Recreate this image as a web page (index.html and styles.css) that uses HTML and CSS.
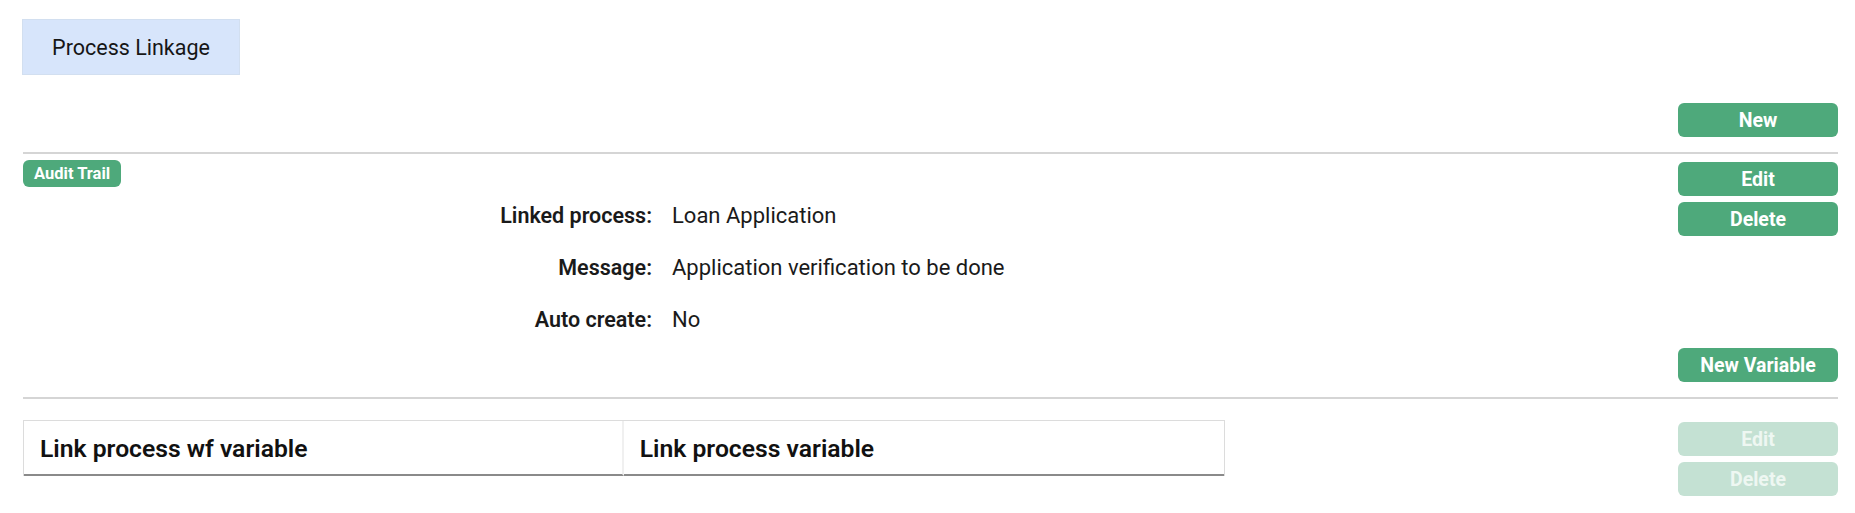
FILE: index.html
```html
<!DOCTYPE html>
<html lang="en">
<head>
<meta charset="utf-8">
<title>Process Linkage</title>
<link rel="stylesheet" href="styles.css">
</head>
<body>
<div class="page">
  <div class="tab">Process Linkage</div>

  <div class="toolbar toolbar-top">
    <button class="btn">New</button>
  </div>

  <hr class="divider">

  <div class="section">
    <div class="section-main">
      <span class="badge">Audit Trail</span>
      <div class="details">
        <div class="label">Linked process:</div>
        <div class="value">Loan Application</div>
        <div class="label">Message:</div>
        <div class="value">Application verification to be done</div>
        <div class="label">Auto create:</div>
        <div class="value">No</div>
      </div>
    </div>
    <div class="actions">
      <button class="btn">Edit</button>
      <button class="btn">Delete</button>
    </div>
  </div>

  <div class="toolbar toolbar-var">
    <button class="btn">New Variable</button>
  </div>

  <hr class="divider">

  <div class="vars">
    <table class="grid">
      <thead>
        <tr>
          <th class="col-first">Link process wf variable</th>
          <th>Link process variable</th>
        </tr>
      </thead>
    </table>
    <div class="actions actions-vars">
      <button class="btn" disabled>Edit</button>
      <button class="btn" disabled>Delete</button>
    </div>
  </div>
</div>
</body>
</html>
```
FILE: styles.css
```css
* { box-sizing: border-box; }
body {
  margin: 0;
  background: #fff;
  font-family: Roboto, "Noto Sans", sans-serif;
  color: #1a1a1a;
}
.page {
  padding: 19px 17px 0 23px;
}
.tab {
  width: 218px;
  height: 56px;
  margin-left: -1px;
  display: flex;
  align-items: center;
  justify-content: center;
  background: #d7e5fb;
  border: 1px solid #d2dff0;
  font-size: 21.5px;
  color: #161616;
}
.toolbar {
  display: flex;
  justify-content: flex-end;
}
.toolbar-top { margin-top: 28px; }
.toolbar-var { margin-top: 2px; }
.btn {
  width: 160px;
  height: 34px;
  border: 0;
  border-radius: 6px;
  background: #4ea97b;
  color: #fff;
  font-family: Roboto, sans-serif;
  font-weight: 700;
  font-size: 19.5px;
  padding: 0;
  cursor: pointer;
}
.btn:disabled {
  background: #c4e1d3;
  color: #eef7f2;
  cursor: default;
}
.divider {
  margin: 15px 0 0;
  border: 0;
  border-top: 2px solid #d5d5d5;
  height: 0;
}
.section {
  display: flex;
  justify-content: space-between;
  align-items: flex-start;
}
.section-main { flex: 1; }
.badge {
  display: inline-flex;
  align-items: center;
  height: 27px;
  margin-top: 6px;
  padding: 0 11px;
  border-radius: 6px;
  background: #4ea97b;
  color: #fff;
  font-weight: 700;
  font-size: 16.5px;
}
.details {
  margin-top: 3px;
  display: grid;
  grid-template-columns: 629px 1fr;
  column-gap: 20px;
  line-height: 52px;
}
.label {
  text-align: right;
  font-weight: 600;
  font-size: 21.5px;
}
.value {
  font-size: 22px;
}
.actions {
  display: flex;
  flex-direction: column;
  gap: 6px;
  margin-top: 8px;
}
.vars {
  display: flex;
  justify-content: space-between;
  align-items: flex-start;
}
.grid {
  width: 66.2%;
  margin-top: 21px;
  border-collapse: separate;
  border-spacing: 0;
  border: 1px solid #dcdcdc;
  border-bottom: 0;
}
.grid th {
  height: 55px;
  padding: 2px 16px 0;
  text-align: left;
  font-weight: 600;
  font-size: 24.7px;
  color: #111;
  border-bottom: 2px solid #8a8a8a;
  width: 50%;
}
.grid .col-first {
  border-right: 2px solid #f0f0f0;
}
.actions-vars { margin-top: 23px; }
```
